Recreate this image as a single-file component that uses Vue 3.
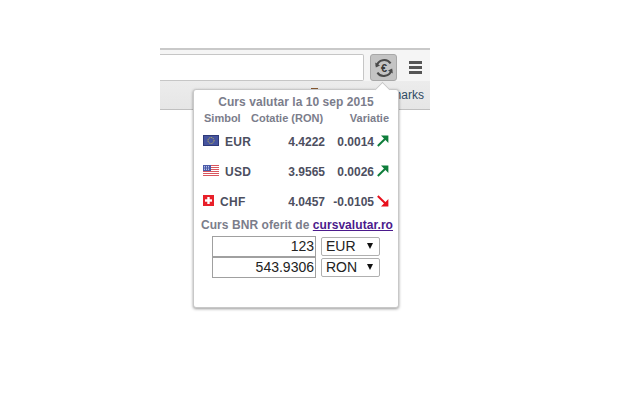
<script setup>
const rows = [
  { sym: 'EUR', cls: 'eu', val: '4.4222', diff: '0.0014', up: true },
  { sym: 'USD', cls: 'us', val: '3.9565', diff: '0.0026', up: true },
  { sym: 'CHF', cls: 'ch', val: '4.0457', diff: '-0.0105', up: false },
]
</script>

<template>
  <div class="page">
    <div class="browser">
      <div class="toolbar">
        <div class="omnibox"></div>
        <div class="extbtn">
          <svg width="24" height="24" viewBox="0 0 24 24" fill="none">
            <path d="M4.6 10A7.8 7.8 0 0 1 18.6 7.4" stroke="#4a4a4a" stroke-width="2"/>
            <path d="M3.2 6.5 L3.8 11.4 L8 9.6 Z" fill="#4a4a4a"/>
            <path d="M19.4 14A7.8 7.8 0 0 1 5.4 16.6" stroke="#4a4a4a" stroke-width="2"/>
            <path d="M20.8 17.5 L20.2 12.6 L16 14.4 Z" fill="#4a4a4a"/>
            <text x="12" y="16" text-anchor="middle" class="euro">€</text>
          </svg>
        </div>
        <div class="menu"><i></i><i></i><i></i></div>
      </div>
      <div class="bookmarks">
        <span class="fav"></span>
        <span class="bm">marks</span>
      </div>
    </div>

    <div class="popup">
      <div class="notch"></div>
      <div class="title">Curs valutar la 10 sep 2015</div>
      <div class="head">
        <span class="h1">Simbol</span>
        <span class="h2">Cotatie (RON)</span>
        <span class="h3">Variatie</span>
      </div>
      <div v-for="r in rows" :key="r.sym" class="row">
        <span class="sym">
          <svg v-if="r.cls === 'eu'" class="flag" width="16" height="11" viewBox="0 0 16 11">
            <rect width="16" height="11" fill="#46549f"/>
            <rect x=".5" y=".5" width="15" height="10" fill="none" stroke="#2f3a78"/>
            <circle cx="8" cy="5.5" r="3" fill="none" stroke="#d8c84a" stroke-dasharray="1 1"/>
          </svg>
          <svg v-else-if="r.cls === 'us'" class="flag" width="16" height="11" viewBox="0 0 16 11">
            <rect width="16" height="11" fill="#fff"/>
            <path d="M0 .5h16M0 2.5h16M0 4.5h16M0 6.5h16M0 8.5h16M0 10.5h16" stroke="#d9565e" stroke-width="1"/>
            <rect width="8" height="6" fill="#4a5aa8"/>
            <path d="M1 1.5h6M1 3h6M1 4.5h6" stroke="#d0d8f4" stroke-width=".8" stroke-dasharray="1 1"/>
          </svg>
          <svg v-else class="flag small" width="11" height="11" viewBox="0 0 11 11">
            <rect width="11" height="11" fill="#e8202a"/>
            <rect x="4.3" y="2" width="2.4" height="7" fill="#fff"/>
            <rect x="2" y="4.3" width="7" height="2.4" fill="#fff"/>
          </svg>
          <span class="code">{{ r.sym }}</span>
        </span>
        <span class="val">{{ r.val }}</span>
        <span class="diff">{{ r.diff }}</span>
        <svg class="arrow" width="12" height="12" viewBox="0 0 12 12" fill="none">
          <template v-if="r.up">
            <path d="M0.8 11 L9 3" stroke="#0d7d3a" stroke-width="2"/>
            <path d="M4 0.6 H11.4 V8 Z" fill="#0d7d3a"/>
          </template>
          <template v-else>
            <path d="M0.8 1 L9 9" stroke="#e8101c" stroke-width="2"/>
            <path d="M4 11.4 H11.4 V4 Z" fill="#e8101c"/>
          </template>
        </svg>
      </div>
      <div class="credit">Curs BNR oferit de <a href="#" class="link">cursvalutar.ro</a></div>
      <div class="conv">
        <div class="input">123</div>
        <div class="select">EUR<span class="tri"></span></div>
      </div>
      <div class="conv">
        <div class="input">543.9306</div>
        <div class="select">RON<span class="tri"></span></div>
      </div>
    </div>
  </div>
</template>

<style>
html, body { margin: 0; background: #fff; }
</style>

<style scoped>
.page {
  width: 640px;
  height: 400px;
  position: relative;
  overflow: hidden;
  background: #fff;
  font-family: "Liberation Sans", Arial, sans-serif;
  padding: 48px 0 0 160px;
  box-sizing: border-box;
}
.browser { width: 270px; }
.toolbar {
  height: 33px;
  box-sizing: border-box;
  background: #f5f5f5;
  border-top: 2px solid #c9c9c9;
  display: flex;
  align-items: flex-start;
  padding-top: 4px;
}
.omnibox {
  width: 204px;
  height: 27px;
  box-sizing: border-box;
  background: #fff;
  border: 1px solid #c6c6c6;
  border-left: 0;
  border-radius: 0 2px 2px 0;
}
.extbtn {
  width: 27px;
  height: 27px;
  box-sizing: border-box;
  margin-left: 6px;
  background: #c4c4c4;
  border: 1px solid #a8a8a8;
  border-radius: 3px;
  display: flex;
  align-items: center;
  justify-content: center;
}
.euro { font: bold 11px "Liberation Sans", sans-serif; fill: #3a3a3a; }
.menu {
  margin-left: 12px;
  margin-top: 7px;
  width: 13px;
  display: flex;
  flex-direction: column;
  gap: 2px;
}
.menu i { display: block; height: 3px; background: #555; }
.bookmarks {
  height: 29px;
  background: linear-gradient(#ececec, #e6e6e6);
  border-bottom: 1px solid #c0c0c0;
  box-sizing: border-box;
  display: flex;
  justify-content: flex-end;
  font-size: 12px;
  line-height: 29px;
  color: #2f4a63;
  position: relative;
}
.bm { margin-right: 6px; }
.fav {
  position: absolute;
  left: 151px;
  top: 7px;
  width: 7px;
  height: 2px;
  background: #8a5a30;
}
.popup {
  position: absolute;
  left: 193px;
  top: 89px;
  width: 206px;
  height: 219px;
  box-sizing: border-box;
  background: #fff;
  border: 1px solid #c8c8c8;
  border-radius: 3px;
  box-shadow: 0 1px 3px rgba(0, 0, 0, .4);
  padding-top: 5px;
  color: #4d4f5f;
  font-size: 12px;
  font-weight: bold;
}
.notch {
  position: absolute;
  left: 183px;
  top: -6px;
  width: 10px;
  height: 10px;
  background: #fff;
  border-left: 1px solid #c8c8c8;
  border-top: 1px solid #c8c8c8;
  transform: rotate(45deg);
}
.title {
  text-align: center;
  color: #7b7d8b;
  line-height: 14px;
  letter-spacing: .05px;
}
.head {
  display: flex;
  margin-top: 2px;
  font-size: 11px;
  line-height: 14px;
  color: #7b7d8b;
  padding-left: 10px;
}
.h1 { width: 47px; }
.h2 { width: 88px; }
.h3 { width: 50px; text-align: right; }
.row {
  display: flex;
  align-items: center;
  height: 30px;
  padding-left: 9px;
}
.head + .row { margin-top: 2px; }
.sym { width: 71px; display: flex; align-items: center; }
.flag { margin-top: -3px; margin-right: 6px; }
.code { letter-spacing: .3px; }
.val { width: 51px; text-align: right; }
.diff { width: 49px; text-align: right; }
.arrow { margin-left: 3px; margin-top: -3px; }
.credit {
  text-align: center;
  color: #7b7d8b;
  line-height: 14px;
  margin-top: 1px;
  padding-left: 2px;
  letter-spacing: .06px;
}
.link { color: #4b1a8c; }
.conv {
  display: flex;
  margin-left: 18px;
  font-weight: normal;
  font-size: 14px;
  color: #222;
}
.credit + .conv { margin-top: 4px; }
.input {
  width: 104px;
  height: 21px;
  box-sizing: border-box;
  border: 1px solid #a0a0a0;
  text-align: right;
  line-height: 19px;
  padding-right: 1px;
}
.select {
  width: 59px;
  height: 19px;
  margin-left: 5px;
  margin-top: 1px;
  box-sizing: border-box;
  border: 1px solid #b0b0b0;
  border-radius: 2px;
  line-height: 17px;
  padding-left: 4px;
  position: relative;
}
.tri {
  position: absolute;
  right: 6px;
  top: 5px;
  border-left: 3.5px solid transparent;
  border-right: 3.5px solid transparent;
  border-top: 6px solid #111;
}
</style>
